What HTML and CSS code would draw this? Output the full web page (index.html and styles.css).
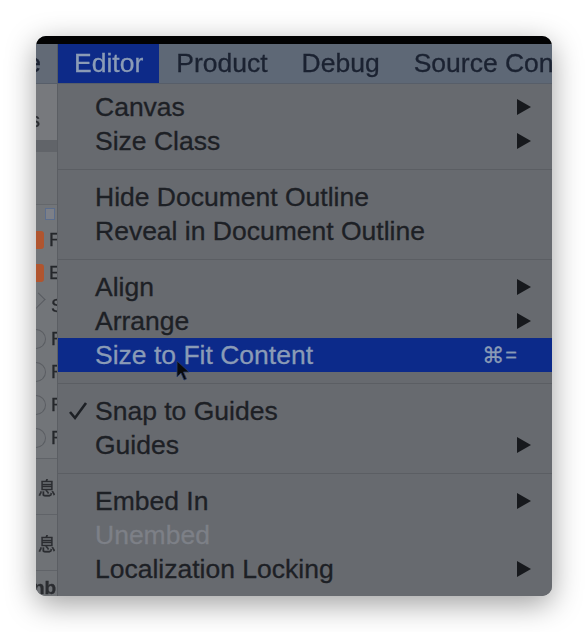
FILE: index.html
```html
<!DOCTYPE html>
<html>
<head>
<meta charset="utf-8">
<link rel="stylesheet" href="styles.css">
</head>
<body>
<div class="stage">
  <div class="frame">
    <div class="topbar"></div>
    <div class="menubar">
      <div class="mb-stub"><span>e</span></div>
      <div class="mb-item active">Editor</div>
      <div class="mb-item">Product</div>
      <div class="mb-item">Debug</div>
      <div class="mb-item">Source Control</div>
    </div>
    <div class="body">
      <div class="strip">
        <div class="s-top"><span class="s-char">s</span></div>
        <div class="s-band"></div>
        <div class="s-mid"></div>
        <div class="s-list">
          <div class="s-plus"><span></span></div>
          <div class="s-row"><span class="ic orange"></span><span class="s-letter">F</span></div>
          <div class="s-row"><span class="ic orange"></span><span class="s-letter">E</span></div>
          <div class="s-row"><span class="ic diamond"></span><span class="s-letter">S</span></div>
          <div class="s-row"><span class="ic circle"></span><span class="s-letter">F</span></div>
          <div class="s-row"><span class="ic circle"></span><span class="s-letter">F</span></div>
          <div class="s-row"><span class="ic circle"></span><span class="s-letter">F</span></div>
          <div class="s-row"><span class="ic circle"></span><span class="s-letter">F</span></div>
        </div>
        <div class="s-cell"><span class="s-cjk">息</span></div>
        <div class="s-cell"><span class="s-cjk">息</span></div>
        <div class="s-last"><span class="s-nb">nb</span></div>
      </div>
      <div class="menu">
        <div class="item"><span class="check"></span><span class="label">Canvas</span><svg class="arrow" viewBox="0 0 14 16"><polygon points="0,0 14,8 0,16"/></svg></div>
        <div class="item"><span class="check"></span><span class="label">Size Class</span><svg class="arrow" viewBox="0 0 14 16"><polygon points="0,0 14,8 0,16"/></svg></div>
        <div class="sep"></div>
        <div class="item"><span class="check"></span><span class="label">Hide Document Outline</span></div>
        <div class="item"><span class="check"></span><span class="label">Reveal in Document Outline</span></div>
        <div class="sep"></div>
        <div class="item"><span class="check"></span><span class="label">Align</span><svg class="arrow" viewBox="0 0 14 16"><polygon points="0,0 14,8 0,16"/></svg></div>
        <div class="item"><span class="check"></span><span class="label">Arrange</span><svg class="arrow" viewBox="0 0 14 16"><polygon points="0,0 14,8 0,16"/></svg></div>
        <div class="item selected"><span class="check"></span><span class="label">Size to Fit Content</span><span class="shortcut"><span class="cmd">⌘</span><span class="eq">=</span></span></div>
        <div class="sep"></div>
        <div class="item"><span class="check"><svg viewBox="0 0 20 20"><path d="M2 11 L7 17 L18 2"/></svg></span><span class="label">Snap to Guides</span></div>
        <div class="item"><span class="check"></span><span class="label">Guides</span><svg class="arrow" viewBox="0 0 14 16"><polygon points="0,0 14,8 0,16"/></svg></div>
        <div class="sep"></div>
        <div class="item"><span class="check"></span><span class="label">Embed In</span><svg class="arrow" viewBox="0 0 14 16"><polygon points="0,0 14,8 0,16"/></svg></div>
        <div class="item disabled"><span class="check"></span><span class="label">Unembed</span></div>
        <div class="item"><span class="check"></span><span class="label">Localization Locking</span><svg class="arrow" viewBox="0 0 14 16"><polygon points="0,0 14,8 0,16"/></svg></div>
      </div>
    </div>
    <svg class="cursor" viewBox="0 0 14 22"><path d="M1 1 L1 17 L5 13 L8 20 L10.5 19 L7.5 12 L13 12 Z"/></svg>
  </div>
</div>
</body>
</html>
```

FILE: styles.css
```css
html, body {
  margin: 0;
  padding: 0;
  background: #ffffff;
}

.stage {
  padding: 36px;
}

.frame {
  position: relative;
  width: 516px;
  height: 560px;
  border-radius: 10px;
  overflow: hidden;
  background: #686b70;
  box-shadow: 0 8px 30px rgba(0, 0, 0, 0.38);
  display: flex;
  flex-direction: column;
  font-family: "Liberation Sans", Arial, sans-serif;
  -webkit-text-stroke: 0.3px currentColor;
  filter: blur(0.4px);
}

.topbar {
  flex: none;
  height: 8px;
  background: #020203;
}

.menubar {
  flex: none;
  height: 39px;
  background: #5e6876;
  border-bottom: 1px solid #575e69;
  display: flex;
  align-items: stretch;
  font-size: 26.5px;
  color: #1b2231;
  white-space: nowrap;
  overflow: hidden;
}

.mb-stub {
  flex: none;
  width: 21px;
  border-right: 1px solid #535a64;
  display: flex;
  justify-content: flex-end;
  align-items: center;
  overflow: hidden;
  background: #626a76;
}

.mb-stub span {
  padding-right: 16px;
}

.mb-item {
  flex: none;
  display: flex;
  align-items: center;
  padding: 0 17px;
}

.mb-item.active {
  padding: 0 16px;
  background: #0d2a88;
  color: #8b9cb6;
}

.body {
  flex: 1;
  display: flex;
  min-height: 0;
}

/* left strip: the app behind the menu */
.strip {
  flex: none;
  width: 21px;
  border-right: 1px solid #5b5e63;
  background: #707377;
  display: flex;
  flex-direction: column;
  overflow: hidden;
  color: #2a2c30;
}

.s-top {
  height: 56px;
  background: #77797d;
  display: flex;
  align-items: flex-end;
  padding-bottom: 8px;
  box-sizing: border-box;
}

.s-char {
  font-size: 20px;
  margin-left: -6px;
}

.s-band {
  height: 12px;
  background: #616469;
}

.s-mid {
  height: 52px;
  background: #6f7276;
  border-bottom: 1px solid #64676b;
}

.s-list {
  display: flex;
  flex-direction: column;
  background: #727579;
  border-bottom: 1px solid #606368;
  padding-bottom: 4px;
}

.s-plus {
  height: 18px;
  display: flex;
  align-items: center;
  justify-content: flex-end;
  padding-right: 2px;
}

.s-plus span {
  width: 8px;
  height: 10px;
  border: 1px solid #5b6d8c;
  background: #7d8088;
}

.s-row {
  height: 33px;
  display: flex;
  align-items: center;
  gap: 5px;
}

.ic {
  flex: none;
  width: 8px;
  height: 18px;
}

.ic.orange {
  background: #b0552f;
  border-radius: 0 3px 3px 0;
}

.ic.diamond {
  width: 9px;
  height: 14px;
  border-right: 1px solid #585b60;
  border-top: 1px solid #585b60;
  transform: rotate(45deg) translate(-6px, 0);
  background: transparent;
}

.ic.circle {
  width: 9px;
  height: 18px;
  border: 1px solid #5a5d62;
  border-left: none;
  border-radius: 0 10px 10px 0;
}

.s-letter {
  font-size: 19px;
  color: #25272b;
}

.s-cell {
  height: 55px;
  border-bottom: 1px solid #606368;
  display: flex;
  align-items: center;
  justify-content: flex-end;
  background: #6f7276;
}

.s-cjk {
  font-family: "Noto Sans CJK SC", sans-serif;
  font-size: 18px;
  margin-right: 1px;
  color: #2b2d31;
}

.s-last {
  flex: 1;
  display: flex;
  align-items: flex-end;
  background: #6f7276;
}

.s-nb {
  font-size: 19px;
  font-weight: bold;
  margin-left: -3px;
  line-height: 16px;
}

/* the menu */
.menu {
  flex: 1;
  padding-top: 6px;
  background: #676a6f;
  font-size: 26.5px;
  color: #1d2025;
  white-space: nowrap;
}

.item {
  height: 34px;
  display: grid;
  grid-template-columns: 27px 1fr auto;
  align-items: center;
  padding: 0 21px 0 10px;
}

.item.selected {
  background: #0c2a8a;
  color: #8a9bb6;
}

.item.disabled {
  color: #7d8087;
}

.check {
  display: flex;
  align-items: center;
}

.check svg {
  width: 20px;
  height: 20px;
  fill: none;
  stroke: #1d2025;
  stroke-width: 2.6;
}

.arrow {
  width: 14px;
  height: 16px;
  fill: #17191d;
}

.shortcut {
  display: flex;
  align-items: center;
  margin-right: 14px;
  color: #8a9bb6;
}

.cmd {
  font-family: "DejaVu Sans", sans-serif;
  font-size: 22px;
}

.eq {
  font-size: 20px;
  margin-left: 1px;
}

.sep {
  height: 22px;
  display: flex;
  align-items: center;
}

.sep::before {
  content: "";
  flex: 1;
  height: 1px;
  background: #5b5e63;
}

.cursor {
  position: absolute;
  left: 140px;
  top: 324px;
  width: 14px;
  height: 22px;
  fill: #0a0b0e;
  stroke: #2a3c6a;
  stroke-width: 0.8;
}
```
